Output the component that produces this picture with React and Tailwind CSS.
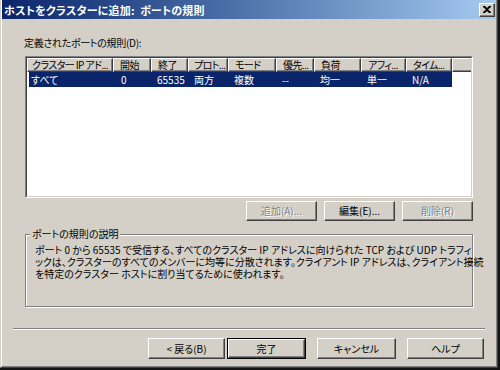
import React from "react";

const cols = [
  { w: 86, h: "クラスター IP アド...", v: "すべて", pl: "pl-[4px]" },
  { w: 38, h: "開始", v: "0", pl: "pl-[6px]" },
  { w: 37, h: "終了", v: "65535", pl: "pl-[6px]" },
  { w: 40, h: "プロト...", v: "両方", pl: "pl-[5px]" },
  { w: 48, h: "モード", v: "複数", pl: "pl-[6px]" },
  { w: 38, h: "優先...", v: "--", pl: "pl-[6px]" },
  { w: 47, h: "負荷", v: "均一", pl: "pl-[6px]" },
  { w: 45, h: "アフィ...", v: "単一", pl: "pl-[6px]" },
  { w: 46, h: "タイム...", v: "N/A", pl: "pl-[6px]" },
];

const Button = ({ children, disabled, className = "" }) => (
  <div
    className={
      "h-full flex items-center justify-center bg-[#d4d0c8] border-t border-l border-t-white border-l-white border-r border-b border-r-[#404040] border-b-[#404040] shadow-[inset_-1px_-1px_0_#808080] " +
      (disabled ? "text-[#808080] [text-shadow:1px_1px_0_#ffffff] " : "text-black ") +
      className
    }
  >
    {children}
  </div>
);

const App = () => {
  return (
    <div className="w-[500px] h-[370px] bg-[#141414] overflow-hidden font-['Noto_Sans_CJK_JP',sans-serif] [font-feature-settings:'palt'] text-[10px] leading-[14px] text-black">
      <div className="w-[498px] h-[368px] bg-[#d4d0c8] border-l border-l-[#d4d0c8] border-r border-b border-r-[#404040] border-b-[#404040]">
        <div className="h-full flex flex-col border-l border-l-white border-r border-b border-r-[#808080] border-b-[#808080]">
          {/* title bar */}
          <div className="h-[19px] flex items-center justify-between pl-[2px] pr-[1px] bg-gradient-to-r from-[#0a246a] to-[#a6caf0]">
            <span className="text-white font-bold text-[11px] tracking-[0.2px] whitespace-pre">
              {"ホストをクラスターに追加:  ポートの規則"}
            </span>
            <div className="w-[16px] h-[14px] flex items-center justify-center bg-[#d4d0c8] border-t border-l border-t-white border-l-white border-r border-b border-r-[#404040] border-b-[#404040] shadow-[inset_-1px_-1px_0_#808080]">
              <svg width="8" height="7" viewBox="0 0 8 7">
                <path d="M0 0h2l2 2 2-2h2v1L5 3.5 8 6v1H6L4 5 2 7H0V6l3-2.5L0 1z" fill="#000" />
              </svg>
            </div>
          </div>

          {/* body */}
          <div className="flex-1 flex flex-col px-[23px]">
            <div className="mt-[17px] -ml-[1px] tracking-[-0.3px]">定義されたポートの規則(D):</div>

            {/* list view */}
            <div className="mt-[6px] h-[142px] bg-white border-t border-l border-t-[#808080] border-l-[#808080] border-r border-b border-r-white border-b-white">
              <div className="h-full border-t border-l border-t-[#404040] border-l-[#404040] border-r border-b border-r-[#d4d0c8] border-b-[#d4d0c8]">
                <div className="flex h-[14px]">
                  {cols.map((c) => (
                    <div
                      key={c.h}
                      style={{ width: c.w }}
                      className={"shrink-0 h-full bg-[#d4d0c8] border-t border-l border-t-white border-l-white border-r border-b border-r-[#404040] border-b-[#404040] shadow-[inset_-1px_-1px_0_#808080] leading-[12px] tracking-[-0.6px] whitespace-nowrap overflow-hidden " + c.pl}
                    >
                      {c.h}
                    </div>
                  ))}
                  <div className="flex-1 h-full bg-[#d4d0c8] border-t border-l border-t-white border-l-white border-b border-b-[#404040] shadow-[inset_0_-1px_0_#808080]" />
                </div>
                <div className="flex h-[15px] w-[423px] ml-[2px] bg-[#0a246a] text-white items-center">
                  {cols.map((c, i) => (
                    <div
                      key={c.h}
                      style={{ width: i === 0 ? c.w - 2 : c.w }}
                      className={"shrink-0 whitespace-nowrap " + (i === 0 ? "pl-[2px]" : i === 1 ? "pl-[8px]" : "pl-[6px]")}
                    >
                      {c.v}
                    </div>
                  ))}
                </div>
              </div>
            </div>

            {/* list buttons */}
            <div className="mt-[3px] h-[20px] flex justify-end gap-[7px]">
              <div className="w-[71px]"><Button disabled>追加(A)...</Button></div>
              <div className="w-[71px]"><Button>編集(E)...</Button></div>
              <div className="w-[71px]"><Button disabled>削除(R)</Button></div>
            </div>

            {/* group box */}
            <div className="relative mt-[13px] h-[73px] border border-[#808080] shadow-[inset_1px_1px_0_#ffffff,1px_1px_0_#ffffff]">
              <span className="absolute -top-[8px] left-[4px] px-[2px] bg-[#d4d0c8]">ポートの規則の説明</span>
              <div className="pt-[9px] pl-[9px] leading-[12px] whitespace-nowrap">
                <div>ポート 0 から 65535 で受信する、すべてのクラスター IP アドレスに向けられた TCP および UDP トラフィ</div>
                <div>ックは、クラスターのすべてのメンバーに均等に分散されます。クライアント IP アドレスは、クライアント接続</div>
                <div>を特定のクラスター ホストに割り当てるために使われます。</div>
              </div>
            </div>

            {/* separator */}
            <div className="mt-[21px] -mx-[12px] border-t border-t-[#808080] border-b border-b-white" />

            {/* wizard buttons */}
            <div className="mt-[8px] h-[21px] flex justify-end -mr-[11px]">
              <div className="w-[77px]"><Button>{"< 戻る(B)"}</Button></div>
              <div className="w-[79px] ml-[2px] border border-black"><Button>完了</Button></div>
              <div className="w-[79px] ml-[11px]"><Button>キャンセル</Button></div>
              <div className="w-[77px] ml-[11px]"><Button>ヘルプ</Button></div>
            </div>
          </div>
        </div>
      </div>
    </div>
  );
};

export default App;
